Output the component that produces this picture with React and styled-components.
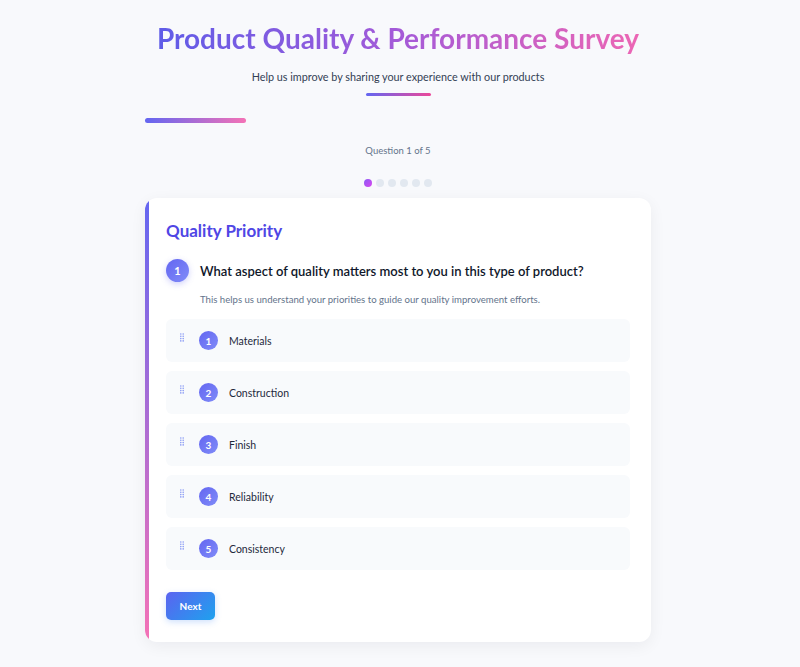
import React from 'react';
import styled, { createGlobalStyle } from 'styled-components';

const GlobalStyle = createGlobalStyle`
  * { box-sizing: border-box; }
  body {
    margin: 0;
    background: #f8f9fc;
    font-family: "Segoe UI", Lato, "Noto Sans", sans-serif;
    color: #1e293b;
  }
`;

const options = ['Materials', 'Construction', 'Finish', 'Reliability', 'Consistency'];

const GripIcon = () => (
  <svg width="4" height="9" viewBox="0 0 4 9" fill="#8b9cf4">
    <circle cx="0.8" cy="1" r="0.8" />
    <circle cx="3.2" cy="1" r="0.8" />
    <circle cx="0.8" cy="3.3" r="0.8" />
    <circle cx="3.2" cy="3.3" r="0.8" />
    <circle cx="0.8" cy="5.6" r="0.8" />
    <circle cx="3.2" cy="5.6" r="0.8" />
    <circle cx="0.8" cy="7.9" r="0.8" />
    <circle cx="3.2" cy="7.9" r="0.8" />
  </svg>
);

const App = () => {
  return (
    <>
      <GlobalStyle />
      <Page>
        <Header>
          <Title>Product Quality &amp; Performance Survey</Title>
          <Subtitle>Help us improve by sharing your experience with our products</Subtitle>
          <Underline />
        </Header>
        <ProgressTrack>
          <ProgressFill style={{ width: '20%' }} />
        </ProgressTrack>
        <Counter>Question 1 of 5</Counter>
        <Dots>
          {[0, 1, 2, 3, 4, 5].map((i) => (
            <Dot key={i} $active={i === 0} />
          ))}
        </Dots>
        <Card>
          <SectionTitle>Quality Priority</SectionTitle>
          <QuestionRow>
            <QuestionNumber>1</QuestionNumber>
            <QuestionText>What aspect of quality matters most to you in this type of product?</QuestionText>
          </QuestionRow>
          <HelpText>This helps us understand your priorities to guide our quality improvement efforts.</HelpText>
          <OptionList>
            {options.map((label, i) => (
              <Option key={label}>
                <Handle>
                  <GripIcon />
                </Handle>
                <OptionNumber>{i + 1}</OptionNumber>
                <OptionLabel>{label}</OptionLabel>
              </Option>
            ))}
          </OptionList>
          <NextButton>Next</NextButton>
        </Card>
      </Page>
    </>
  );
};

const Page = styled.div`
  width: 506px;
  margin-left: calc(50% - 255px);
  padding: 18px 0 24px;
`;

const Header = styled.header`
  display: flex;
  flex-direction: column;
  align-items: center;
`;

const Title = styled.h1`
  margin: 0;
  font-size: 28px;
  font-weight: 700;
  line-height: 40px;
  white-space: nowrap;
  background: linear-gradient(90deg, #5f5ce8 0%, #a45ad8 50%, #ec66b4 100%);
  -webkit-background-clip: text;
  background-clip: text;
  color: transparent;
`;

const Subtitle = styled.p`
  margin: 11px 0 0;
  font-size: 10.8px;
  line-height: 16px;
  color: #334155;
`;

const Underline = styled.div`
  width: 65px;
  height: 3px;
  margin-top: 8px;
  border-radius: 2px;
  background: linear-gradient(90deg, #6366f1, #ec4899);
`;

const ProgressTrack = styled.div`
  margin-top: 22px;
  height: 5px;
  border-radius: 3px;
`;

const ProgressFill = styled.div`
  height: 100%;
  border-radius: 3px;
  background: linear-gradient(90deg, #6366f1, #f472b6);
`;

const Counter = styled.div`
  margin-top: 21px;
  text-align: center;
  font-size: 9.5px;
  line-height: 14px;
  color: #64748b;
`;

const Dots = styled.div`
  display: flex;
  justify-content: center;
  gap: 4px;
  margin-top: 21px;
`;

const Dot = styled.span`
  width: 8px;
  height: 8px;
  border-radius: 50%;
  background: ${({ $active }) => ($active ? 'linear-gradient(135deg, #8b5cf6, #d946ef)' : '#e2e8f0')};
`;

const Card = styled.section`
  margin-top: 11px;
  background: #fff;
  border-radius: 12px;
  padding: 21px 21px 22px 21px;
  position: relative;
  overflow: hidden;
  box-shadow: 0 4px 16px rgba(15, 23, 42, 0.06);

  &::before {
    content: '';
    position: absolute;
    left: 0;
    top: 0;
    bottom: 0;
    width: 4px;
    background: linear-gradient(180deg, #6366f1, #f472b6);
  }
`;

const SectionTitle = styled.h2`
  margin: 0;
  font-size: 17px;
  font-weight: 700;
  line-height: 24px;
  color: #4f46e5;
`;

const QuestionRow = styled.div`
  display: flex;
  align-items: center;
  gap: 11px;
  margin-top: 16px;
`;

const QuestionNumber = styled.div`
  width: 23px;
  height: 23px;
  border-radius: 50%;
  flex-shrink: 0;
  display: flex;
  align-items: center;
  justify-content: center;
  background: linear-gradient(135deg, #6366f1, #818cf8);
  color: #fff;
  font-size: 11px;
  font-weight: 700;
  box-shadow: 0 2px 6px rgba(99, 102, 241, 0.3);
`;

const QuestionText = styled.div`
  font-size: 13px;
  font-weight: 600;
  line-height: 18px;
  color: #0f172a;
`;

const HelpText = styled.p`
  margin: 11px 0 0 34px;
  font-size: 9.6px;
  line-height: 14px;
  color: #64748b;
`;

const OptionList = styled.div`
  display: flex;
  flex-direction: column;
  gap: 9px;
  margin-top: 12px;
`;

const Option = styled.div`
  display: flex;
  align-items: center;
  height: 43px;
  padding: 0 14px;
  border-radius: 6px;
  background: #f8fafc;
`;

const Handle = styled.span`
  display: flex;
  width: 19px;
  align-self: flex-start;
  margin-top: 14px;
`;

const OptionNumber = styled.div`
  width: 19px;
  height: 19px;
  border-radius: 50%;
  display: flex;
  align-items: center;
  justify-content: center;
  background: linear-gradient(135deg, #6366f1, #818cf8);
  color: #fff;
  font-size: 10px;
  font-weight: 700;
`;

const OptionLabel = styled.span`
  margin-left: 11px;
  font-size: 10.5px;
  color: #1e293b;
`;

const NextButton = styled.button`
  margin-top: 22px;
  width: 49px;
  height: 28px;
  border: none;
  border-radius: 5px;
  background: linear-gradient(135deg, #5b63f0, #1ea2ee);
  color: #fff;
  font-family: inherit;
  font-size: 10px;
  font-weight: 700;
  box-shadow: 0 2px 6px rgba(59, 130, 246, 0.25);
  cursor: pointer;
`;

export default App;
